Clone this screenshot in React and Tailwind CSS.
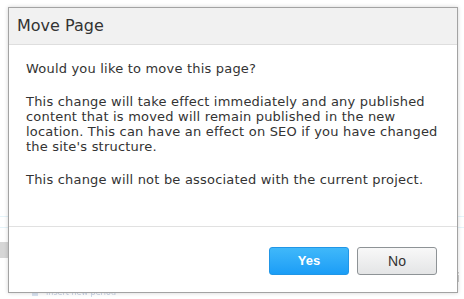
export default function App() {
  return (
    <div className="relative w-[464px] h-[299px] overflow-hidden bg-white font-['DejaVu_Sans',Verdana,sans-serif]">
      {/* faded page behind the dialog */}
      <div className="flex flex-col w-full h-full opacity-40 blur-[0.6px]">
        <div className="h-[220px]"></div>
        <div className="h-px bg-[#bfe6f5]"></div>
        <div className="h-[10px]"></div>
        <div className="h-px bg-[#bfe6f5]"></div>
        <div className="h-[14px]"></div>
        <div className="flex h-[16px]">
          <div className="w-[10px] bg-[#9a9a9a]"></div>
          <div className="flex-1"></div>
          <div className="w-[20px] bg-[#9a9a9a] mr-[100px]"></div>
        </div>
        <div className="flex items-end justify-end pr-1 h-[30px] text-[13px] text-[#777]">
          <span>bi</span>
        </div>
        <div className="flex items-center gap-2 pl-[32px] text-[8px] text-[#6a87b8]">
          <span className="w-[6px] h-[5px] bg-[#9fb7dc]"></span>
          <span>Insert new period</span>
        </div>
      </div>

      {/* dialog */}
      <div className="absolute left-[8px] top-[7px] w-[450px] h-[286px] flex flex-col bg-white border border-[#a3a3a3] shadow-[0_0_4px_rgba(0,0,0,0.18)]">
        <div className="h-[37px] shrink-0 flex items-center pl-[8px] bg-[#f1f1f1] border-b border-[#dedede]">
          <h1 className="text-[16px] text-[#333]">Move Page</h1>
        </div>
        <div className="flex-1 pt-[16px] pl-[17px] pr-[10px] text-[13px] leading-[15px] tracking-[0.2px] text-[#333] border-b border-[#e1e1e1]">
          <p>Would you like to move this page?</p>
          <p className="mt-[18px]">
            This change will take effect immediately and any published content that is moved will remain published in the new location. This can have an effect on SEO if you have changed the site's structure.
          </p>
          <p className="mt-[18px]">This change will not be associated with the current project.</p>
        </div>
        <div className="h-[65px] shrink-0 flex justify-end gap-[8px] pt-[20px] pr-[20px] font-['Liberation_Sans',Arial,sans-serif]">
          <button className="w-[80px] h-[28px] rounded-[3px] border border-[#2196e6] bg-gradient-to-b from-[#3fb8fa] to-[#1a9df6] text-white text-[13px] font-bold">
            Yes
          </button>
          <button className="w-[80px] h-[28px] rounded-[3px] border border-[#8e9396] bg-gradient-to-b from-[#f8f8f8] to-[#e4e5e6] text-[#333] text-[14px]">
            No
          </button>
        </div>
      </div>
    </div>
  );
}
